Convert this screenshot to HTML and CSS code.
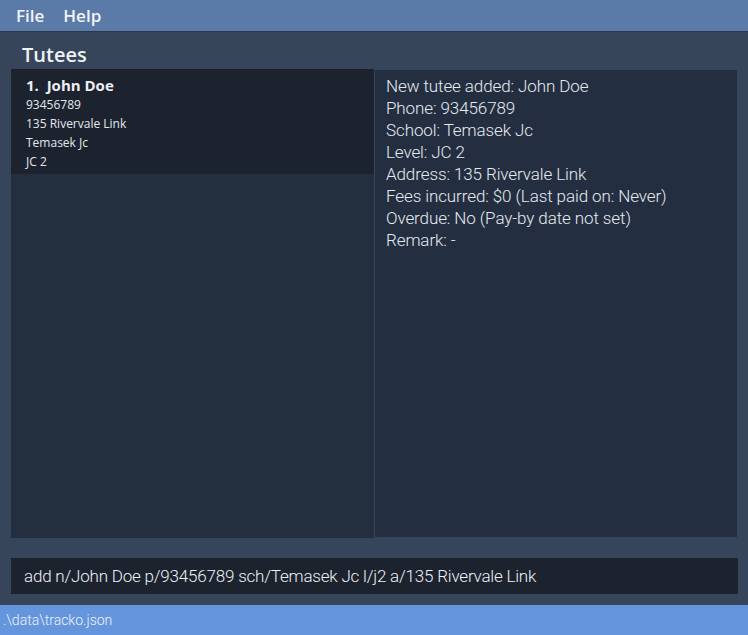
FILE: index.html
```html
<!DOCTYPE html>
<html>
<head>
<meta charset="utf-8">
<link rel="stylesheet" href="styles.css">
</head>
<body>
<div class="app">
  <div class="menubar">
    <span class="menu-item">File</span>
    <span class="menu-item">Help</span>
  </div>
  <div class="main">
    <div class="title">Tutees</div>
    <div class="panels">
      <div class="list">
        <div class="card">
          <div class="name">1.&nbsp;&nbsp;John Doe</div>
          <div class="detail">93456789</div>
          <div class="detail">135 Rivervale Link</div>
          <div class="detail">Temasek Jc</div>
          <div class="detail">JC 2</div>
        </div>
      </div>
      <div class="result">
        <div>New tutee added: John Doe</div>
        <div>Phone: 93456789</div>
        <div>School: Temasek Jc</div>
        <div>Level: JC 2</div>
        <div>Address: 135 Rivervale Link</div>
        <div>Fees incurred: $0 (Last paid on: Never)</div>
        <div>Overdue: No (Pay-by date not set)</div>
        <div>Remark: -</div>
      </div>
    </div>
    <div class="command">add n/John Doe p/93456789 sch/Temasek Jc l/j2 a/135 Rivervale Link</div>
  </div>
  <div class="status">.\data\tracko.json</div>
</div>
</body>
</html>
```

FILE: styles.css
```css
html, body {
  margin: 0;
  padding: 0;
}
body {
  width: 748px;
  height: 635px;
  overflow: hidden;
  background: #364559;
  font-family: Roboto, "Liberation Sans", sans-serif;
}
.app {
  display: flex;
  flex-direction: column;
  width: 748px;
  height: 635px;
}
.menubar {
  height: 31px;
  background: #5a7ba8;
  border-bottom: 1px solid #2c3747;
  display: flex;
  align-items: center;
  padding-left: 16px;
  gap: 19px;
}
.menu-item {
  color: #f2f4f8;
  font-family: "Open Sans", sans-serif;
  font-weight: 600;
  font-size: 17px;
  line-height: 31px;
}
.main {
  flex: 1;
  display: flex;
  flex-direction: column;
  padding: 0 11px 11px 11px;
  background: #364559;
}
.title {
  height: 37px;
  box-sizing: border-box;
  padding: 10px 0 0 11px;
  color: #eef1f5;
  font-family: "Open Sans", sans-serif;
  font-weight: 600;
  font-size: 20px;
  line-height: 26px;
}
.panels {
  height: 469px;
  display: flex;
  gap: 1px;
}
.list {
  width: 363px;
  background: #232f3f;
  flex: none;
}
.card {
  background: #1c222e;
  height: 105px;
  box-sizing: border-box;
  padding: 6px 0 0 15px;
}
.name {
  color: #eceff4;
  font-family: "Open Sans", sans-serif;
  font-weight: 700;
  font-size: 15px;
  line-height: 20px;
}
.detail {
  color: #e4e8ee;
  font-family: "Open Sans", sans-serif;
  font-size: 12px;
  line-height: 19px;
}
.result {
  flex: 1;
  margin: 1px 0 1px 0;
  background: #232f40;
  padding: 5px 0 0 11px;
  color: #e6eaf0;
  font-size: 17px;
  line-height: 22px;
  font-weight: 300;
  letter-spacing: -0.1px;
}
.command {
  margin-top: 20px;
  height: 36px;
  background: #1c222e;
  color: #eef1f5;
  font-size: 17px;
  font-weight: 300;
  letter-spacing: -0.2px;
  line-height: 36px;
  padding-left: 13px;
  margin-right: -1px;
}
.status {
  height: 30px;
  background: #6495dd;
  color: #eef2f8;
  font-size: 14px;
  font-weight: 300;
  line-height: 30px;
  padding-left: 3px;
}
```
